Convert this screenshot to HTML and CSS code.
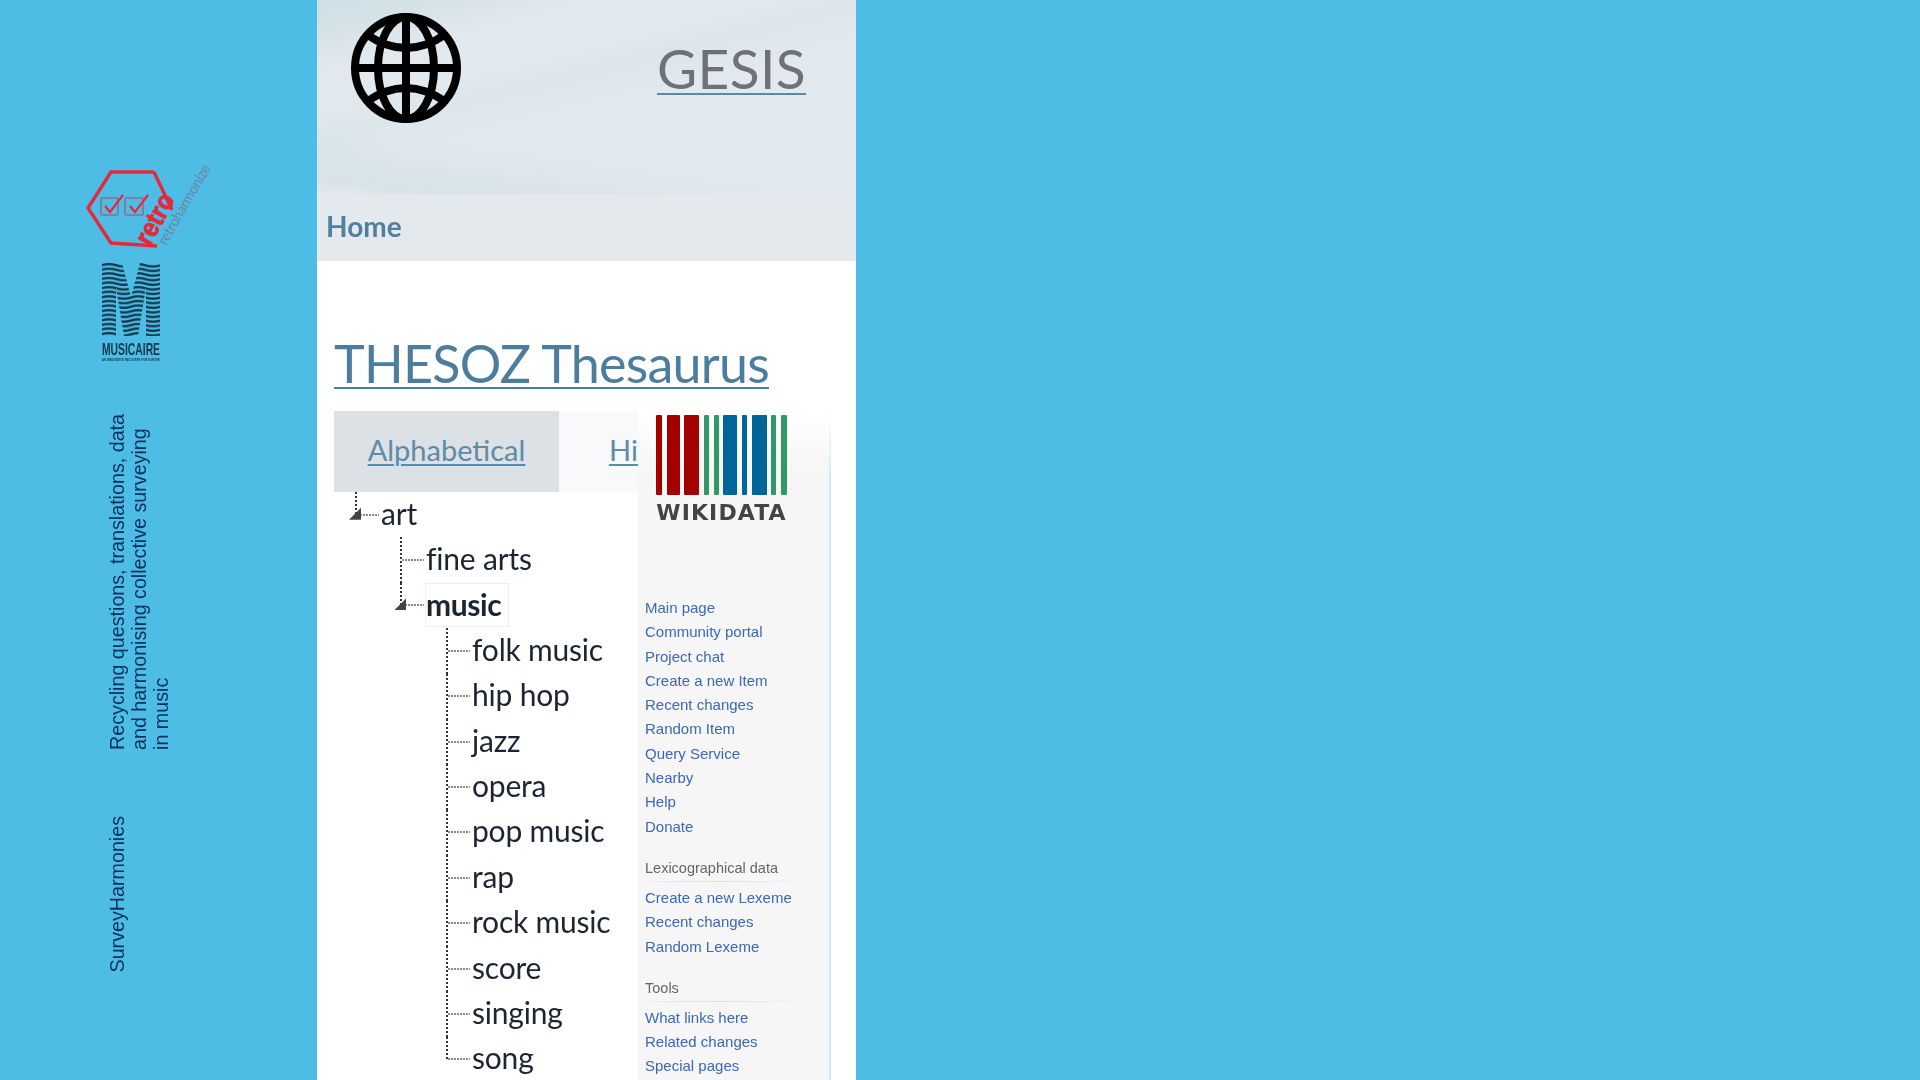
FILE: index.html
```html
<!DOCTYPE html>
<html lang="en">
<head>
<meta charset="utf-8">
<title>SurveyHarmonies</title>
<link rel="stylesheet" href="styles.css">
</head>
<body>
<div class="slide">
  <aside class="rail">
    <svg class="retro" viewBox="0 0 130 90" width="130" height="90" aria-label="retroharmonize logo">
      <path class="hex" d="M72 81 L26 78 L3 43 L26 7 L69 7 M69 7 L87 45" />
      <rect class="box" x="16" y="33" width="17" height="17" rx="1"/>
      <rect class="box" x="40" y="33" width="18" height="17" rx="1"/>
      <path class="tick" d="M20 41 L25 47 L38 30"/>
      <path class="tick" d="M45 41 L50 47 L63 30"/>
      <text class="retro-word" transform="translate(65 82) rotate(-62)" textLength="54" lengthAdjust="spacingAndGlyphs">retro</text>
      <text class="retro-sub" transform="translate(81 81) rotate(-60)" textLength="90" lengthAdjust="spacingAndGlyphs">retroharmonize</text>
    </svg>
    <svg class="musicaire" viewBox="0 0 58 100" width="58" height="100" aria-label="Musicaire logo">
      <defs>
        <pattern id="waves" width="58" height="4.6" patternUnits="userSpaceOnUse">
          <path d="M-1 2.3 Q7 0 14.5 2.3 T29 2.3 T43.5 2.3 T59 2.3" fill="none" stroke="#14384c" stroke-width="2.2"/>
        </pattern>
      </defs>
      <polygon fill="url(#waves)" points="0,0 20,0 29,34 38,0 58,0 58,73 44,73 44,24 36,73 22,73 14,24 14,73 0,73"/>
      <text class="m-name" x="0" y="92" textLength="58" lengthAdjust="spacingAndGlyphs">MUSICAIRE</text>
      <text class="m-tag" x="0" y="98" textLength="58" lengthAdjust="spacingAndGlyphs">AN INNOVATIVE RECOVERY FOR EUROPE</text>
    </svg>
    <div class="blurb">
      <p class="vert tagline">Recycling questions, translations, data<br>and harmonising collective surveying<br>in music</p>
      <p class="vert project">SurveyHarmonies</p>
    </div>
  </aside>

  <main class="site">
    <header class="banner">
      <svg class="globe" viewBox="0 0 110 110" width="110" height="110" aria-hidden="true">
        <g fill="none" stroke="#000" stroke-width="8">
          <circle cx="55" cy="55" r="51"/>
          <ellipse cx="55" cy="55" rx="28" ry="51"/>
          <path d="M55 4 V106 M4 55 H106"/>
          <path d="M15 21 Q55 49 95 21"/>
          <path d="M15 89 Q55 61 95 89"/>
        </g>
      </svg>
      <a class="brand" href="#">GESIS</a>
    </header>
    <nav class="navbar"><a class="home" href="#">Home</a></nav>
    <div class="content">
      <h1 class="title"><a href="#">THESOZ Thesaurus</a></h1>
      <div class="columns">
        <section class="browser">
          <div class="tabs">
            <a class="tab active" href="#">Alphabetical</a>
            <a class="tab" href="#">Hierarchical</a>
          </div>
          <ul class="tree">
            <li class="node l1"><span class="conn last"><i class="tri"></i></span><span class="label">art</span></li>
            <li class="node l2"><span class="conn"></span><span class="label">fine arts</span></li>
            <li class="node l2"><span class="conn last"><i class="tri"></i></span><span class="label selected">music</span></li>
            <li class="node l3"><span class="conn"></span><span class="label">folk music</span></li>
            <li class="node l3"><span class="conn"></span><span class="label">hip hop</span></li>
            <li class="node l3"><span class="conn"></span><span class="label">jazz</span></li>
            <li class="node l3"><span class="conn"></span><span class="label">opera</span></li>
            <li class="node l3"><span class="conn"></span><span class="label">pop music</span></li>
            <li class="node l3"><span class="conn"></span><span class="label">rap</span></li>
            <li class="node l3"><span class="conn"></span><span class="label">rock music</span></li>
            <li class="node l3"><span class="conn"></span><span class="label">score</span></li>
            <li class="node l3"><span class="conn"></span><span class="label">singing</span></li>
            <li class="node l3"><span class="conn last"></span><span class="label">song</span></li>
          </ul>
        </section>
        <aside class="wiki">
          <div class="wiki-logo">
            <div class="bars">
              <i class="bar red w6"></i><i class="bar red w13"></i><i class="bar red w15"></i>
              <i class="bar green w5"></i><i class="bar green w5"></i>
              <i class="bar blue w14"></i><i class="bar blue w5"></i><i class="bar blue w15"></i>
              <i class="bar green w5"></i><i class="bar green w6"></i>
            </div>
            <div class="wordmark">WIKIDATA</div>
          </div>
          <ul class="links first">
            <li>Main page</li><li>Community portal</li><li>Project chat</li><li>Create a new Item</li><li>Recent changes</li><li>Random Item</li><li>Query Service</li><li>Nearby</li><li>Help</li><li>Donate</li>
          </ul>
          <h3 class="portal">Lexicographical data</h3>
          <ul class="links">
            <li>Create a new Lexeme</li><li>Recent changes</li><li>Random Lexeme</li>
          </ul>
          <h3 class="portal">Tools</h3>
          <ul class="links">
            <li>What links here</li><li>Related changes</li><li>Special pages</li>
          </ul>
        </aside>
      </div>
    </div>
  </main>
</div>
</body>
</html>
```

FILE: styles.css
```css
* { box-sizing: border-box; }
html, body { margin: 0; height: 100%; overflow: hidden; }
body { background: #4dbde6; font-family: "Liberation Sans", Arial, sans-serif; }
a { color: inherit; }
ul { list-style: none; margin: 0; padding: 0; }

.slide { display: flex; height: 1080px; }

/* left rail */
.rail { width: 317px; flex: none; display: flex; flex-direction: column; padding: 165px 0 0 85px; }
.retro, .musicaire { display: block; overflow: visible; filter: blur(0.5px); }
.hex { fill: none; stroke: #e6283c; stroke-width: 3.4; stroke-linejoin: miter; }
.box { fill: none; stroke: #8f6f88; stroke-width: 1.6; }
.tick { fill: none; stroke: #e6283c; stroke-width: 2.2; }
.retro-word { font: 700 27px "Liberation Sans", sans-serif; fill: #e6283c; stroke: #e6283c; stroke-width: 0.9px; }
.retro-sub { font: 400 15px "Lato", sans-serif; fill: #70829c; }
.musicaire { margin: 8px 0 0 17px; }
.m-name { font: 700 17px "Liberation Sans", sans-serif; fill: #14384c; }
.m-tag { font: 700 3.5px "Liberation Sans", sans-serif; fill: #14384c; }
.blurb { display: flex; flex-direction: column; align-items: flex-start; margin: 51px 0 0 21px; }
.vert { margin: 0; writing-mode: vertical-rl; transform: rotate(180deg); color: #08305c; font-size: 19.7px; line-height: 22px; text-align: left; white-space: nowrap; }
.project { margin-top: 66px; }

/* centre page */
.site { width: 539px; flex: none; background: #fff; overflow: hidden; font-family: "Lato", "Open Sans", sans-serif; }
.banner {
  height: 194px;
  display: flex; align-items: flex-start; justify-content: space-between;
  padding: 13px 50px 0 34px;
  background-color: #e2e9ee;
  background-image:
    linear-gradient(165deg, #cfdfe6 0, #d4e2e8 9%, rgba(226,233,238,0) 22%),
    linear-gradient(188deg, rgba(226,233,238,0) 72%, #d6e3e9 93%, rgba(226,233,238,0.5) 100%),
    linear-gradient(166deg, rgba(226,233,238,0) 34%, #dbe6eb 42%, rgba(226,233,238,0) 54%);
}
.globe { display: block; filter: blur(0.4px); }
.brand { color: #6d7278; font-size: 55px; line-height: 76px; margin-top: 17px; letter-spacing: 0.4px; text-decoration-color: #5e88a6; text-decoration-thickness: 2px; text-underline-offset: 4px; filter: blur(0.3px); }
.navbar { height: 67px; background: #e4e9ed; display: flex; align-items: center; padding: 0 0 4px 9px; }
.home { color: #517f9e; font-size: 28px; font-weight: 700; text-decoration: none; filter: blur(0.3px); }
.content { padding: 74px 0 0 17px; }
.title { margin: 0 0 20px; font-size: 52px; line-height: 56px; font-weight: 400; color: #4d7d9e; letter-spacing: -0.75px; white-space: nowrap; filter: blur(0.3px); }
.title a { text-decoration-thickness: 2px; text-underline-offset: 4px; }
.columns { display: flex; align-items: flex-start; }
.browser { width: 304px; flex: none; overflow: hidden; }
.tabs { display: flex; height: 81px; background: #f8f9fa; white-space: nowrap; overflow: hidden; }
.tab { flex: none; height: 81px; line-height: 78px; font-size: 29px; color: #5f8aa8; text-decoration-thickness: 1.5px; text-underline-offset: 3px; }
.tab.active { width: 225px; background: #dbe1e4; text-align: center; margin-right: 50px; }
.tree { color: #1c2530; font-size: 30px; letter-spacing: -0.2px; filter: blur(0.3px); }
.node { display: flex; align-items: center; height: 45.4px; white-space: nowrap; }
.label { margin-top: -4px; }
.l1 { padding-left: 21px; }
.l2 { padding-left: 66px; }
.l3 { padding-left: 112px; }
.conn {
  flex: none; width: 26px; height: 100%; display: flex; align-items: center;
  background:
    repeating-linear-gradient(to bottom, #333 0 2px, transparent 2px 4px) left top / 2px 100% no-repeat,
    repeating-linear-gradient(to right, #8a8a8a 0 2px, transparent 2px 3px) 2px center / 22px 2px no-repeat;
}
.conn.last {
  background:
    repeating-linear-gradient(to bottom, #333 0 2px, transparent 2px 4px) left top / 2px 50% no-repeat,
    repeating-linear-gradient(to right, #8a8a8a 0 2px, transparent 2px 3px) 2px center / 22px 2px no-repeat;
}
.tri { display: block; width: 12px; height: 12px; margin: -2px 0 0 -6px; background: #444; clip-path: polygon(100% 0, 100% 100%, 0 100%); }
.selected { font-weight: 700; height: 44px; line-height: 40px; margin-top: 0; border: 1px solid #eee; margin-left: -1px; padding-right: 7px; letter-spacing: -0.4px; }

/* wikidata column */
.wiki { width: 193px; flex: none; height: 760px; padding: 4px 0 0 7px; background: linear-gradient(to bottom, #fff 0, #f6f6f6 60px); border-right: 2px solid; border-image: linear-gradient(to bottom, #fff 0, #cfe8f5 70px) 1; }
.wiki-logo { width: 131px; margin-left: 11px; filter: blur(0.5px); }
.bars { display: flex; justify-content: space-between; height: 80px; }
.bar { display: block; border-radius: 1px; }
.red { background: #a50000; }
.green { background: #2f9a68; }
.blue { background: #006699; }
.w5 { width: 5px; } .w6 { width: 6px; } .w13 { width: 13px; } .w14 { width: 14px; } .w15 { width: 15px; }
.wordmark { font: 700 22px/22px "DejaVu Sans", sans-serif; letter-spacing: 1.1px; color: #444; margin-top: 7px; white-space: nowrap; text-align: center; }
.links { font-size: 15px; line-height: 24.3px; color: #3c68b4; font-family: "Liberation Sans", sans-serif; filter: blur(0.5px); }
.links.first { margin-top: 72px; }
.portal { margin: 20px 30px 4px 0; padding-bottom: 4px; font: 400 14.5px/19px "Liberation Sans", sans-serif; color: #666; background: linear-gradient(to right, #eee, #ddd 50%, #f6f6f6) bottom / 100% 1px no-repeat; filter: blur(0.5px); }
```
